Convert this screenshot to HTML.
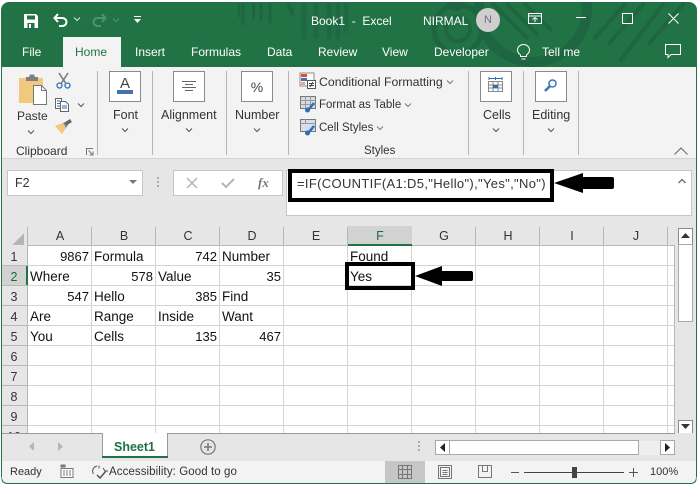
<!DOCTYPE html>
<html><head><meta charset="utf-8">
<style>
html,body{margin:0;padding:0;background:#fff}
#w{position:relative;width:699px;height:487px;overflow:hidden;background:#fff;font-family:"Liberation Sans",Arial,sans-serif;font-size:12.5px;color:#222}
#w div{position:absolute;white-space:nowrap}
.t{color:#fff;font-size:12px;top:44px;line-height:16px}
.r{color:#333;line-height:15px}
.c{font-size:13.5px;color:#111;line-height:16px}
.d{font-size:13px;color:#111;line-height:16px}
.h{font-size:12.5px;color:#333;top:228px;line-height:16px;text-align:center;width:64px}
.n{font-size:12.5px;color:#333;left:1px;width:26px;text-align:center;line-height:16px}
.box{background:#fff;border:1px solid #8a8a8a;width:30px;height:29px;top:71px}
.sep{background:#b5b5b5;width:1px;top:71px;height:84px}
.lab{font-size:12.5px;color:#333;top:107px;line-height:16px;text-align:center}
svg{position:absolute;overflow:visible}
</style></head><body><div id="w">

<!-- title bar -->
<div style="left:1px;top:2px;width:696px;height:65px;background:#217346;border-radius:8px 8px 0 0;overflow:hidden">
<svg style="left:-1px;top:-2px" width="699" height="67" fill="none" stroke="#1e6540">
<path d="M239 3v14M243 3v22" stroke-width="3"/><path d="M253.500 3v16M261 3v18M270 3v20" stroke-width="3"/>
<path d="M288 3l5 12" stroke-width="4"/><path d="M304 3v36M316 3v36M329 3v36M338 3v36M346 3v30" stroke-width="5" opacity=".75"/>
<circle cx="456" cy="2" r="9" fill="#1e6540" stroke="none"/>
<circle cx="458" cy="29" r="12" stroke-width="4"/><circle cx="458" cy="29" r="24" stroke-width="5"/>
<circle cx="533" cy="8" r="54" stroke-width="10" opacity=".9"/>
<path d="M492 3l36 36M506 3l32 32M524 3l28 28M626 3l-32 36M644 3l-36 42M664 3l-44 58M684 3l-36 42" stroke-width="4"/>
</svg></div>

<!-- QAT -->
<svg style="left:24px;top:14px" width="15" height="14" viewBox="0 0 15 14"><path d="M0 0h12l2 2v12H0z" fill="#fff"/><path d="M3 1.500h8v4H3z" fill="#217346"/><path d="M3.500 9h7v5h-7z" fill="#217346"/><path d="M5 10h2v4H5z" fill="#fff"/></svg>
<svg style="left:53px;top:13px" width="15" height="14" viewBox="0 0 15 14" fill="none" stroke="#fff" stroke-width="2"><path d="M5 1L1.500 5 5 9"/><path d="M2 5h7c6 0 6 8 0 8H6"/></svg>
<svg style="left:74px;top:17px" width="6" height="4" fill="none" stroke="#d6e6dc"><path d="M0 .5l3 3 3-3"/></svg>
<svg style="left:92px;top:13px" width="15" height="14" viewBox="0 0 15 14" fill="none" stroke="#4f9270" stroke-width="2"><path d="M10 1l3.500 4L10 9"/><path d="M13 5H6c-6 0-6 8 0 8h3"/></svg>
<svg style="left:113px;top:18px" width="6" height="4" fill="none" stroke="#4f9270"><path d="M0 .5l3 3 3-3"/></svg>
<svg style="left:134px;top:16px" width="8" height="8"><path d="M0 .5h7" stroke="#fff"/><path d="M0 3h7L3.500 7z" fill="#fff"/></svg>

<div style="left:311px;top:13px;color:#fff;font-size:12px;line-height:16px">Book1&nbsp; - &nbsp;Excel</div>
<div style="left:423px;top:13px;color:#fff;font-size:12px;line-height:16px">NIRMAL</div>
<div style="left:476px;top:8px;width:24px;height:24px;border-radius:50%;background:#cfcfcf;color:#6f6f8f;font-size:11px;line-height:24px;text-align:center">N</div>

<svg style="left:528px;top:13px" width="14" height="11" fill="none" stroke="#fff"><path d="M.5 .5h13v10H.5zM.5 3h13"/><path d="M7 9V4.500M4.500 6.500L7 4.500l2.500 2"/></svg>
<div style="left:576px;top:17px;width:10px;height:1px;background:#fff"></div>
<div style="left:622px;top:13px;width:9px;height:9px;border:1px solid #fff"></div>
<svg style="left:668px;top:13px" width="11" height="11" stroke="#fff" fill="none"><path d="M.5 .5l10 10M10.500 .5l-10 10"/></svg>

<!-- tabs -->
<div style="left:63px;top:37px;width:58px;height:30px;background:#f3f3f3"></div>
<div class="t" style="left:22px">File</div>
<div class="t" style="left:75px;color:#217346">Home</div>
<div class="t" style="left:135px">Insert</div>
<div class="t" style="left:191px">Formulas</div>
<div class="t" style="left:267px">Data</div>
<div class="t" style="left:318px">Review</div>
<div class="t" style="left:382px">View</div>
<div class="t" style="left:434px">Developer</div>
<svg style="left:516px;top:44px" width="15" height="17" fill="none" stroke="#fff"><path d="M4.500 11C2 9 1.500 7.500 1.500 6a6 5.500 0 0 1 12 0c0 1.500-.5 3-3 5v1.500h-6z"/><path d="M5.500 15h4"/></svg>
<div class="t" style="left:542px">Tell me</div>
<svg style="left:665px;top:44px" width="17" height="15" fill="none" stroke="#fff"><path d="M.5 .5h15v10H6l-3 3v-3H.5z"/></svg>

<!-- ribbon -->
<div style="left:2px;top:67px;width:694px;height:91px;background:#f3f3f3"></div>
<div style="left:2px;top:158px;width:694px;height:1px;background:#d2d2d2"></div>
<div style="left:2px;top:159px;width:694px;height:67px;background:#e6e6e6"></div>

<!-- clipboard -->
<svg style="left:19px;top:74px" width="28" height="32" viewBox="0 0 28 32">
<path d="M0 4h24v25H0z" fill="#f0c97f"/>
<path d="M7 3h3l1-2.500h4l1 2.500h3v4H7z" fill="#7f7f7f"/>
<path d="M14.500 11.500h8l5 5v14h-13z" fill="#fff" stroke="#777"/>
<path d="M22.500 11.500v5h5" fill="none" stroke="#777"/></svg>
<svg style="left:56px;top:73px" width="15" height="16" viewBox="0 0 15 16" fill="none"><path d="M3 0l6.500 10M12 0L5.500 10" stroke="#777" stroke-width="1.500"/><circle cx="3.500" cy="12.500" r="2.500" stroke="#2f6eb5" stroke-width="1.300"/><circle cx="11.500" cy="12.500" r="2.500" stroke="#2f6eb5" stroke-width="1.300"/></svg>
<svg style="left:55px;top:98px" width="15" height="14" viewBox="0 0 15 14" fill="#fff" stroke="#666"><path d="M.5 .5h6v10h-6z"/><path d="M5.500 3.500h5l3 3v7h-8z"/><path d="M2 3h3M2 5.500h3M2 8h3M7 8h5M7 10h5" stroke="#2f6eb5"/></svg>
<svg style="left:78px;top:103px" width="6" height="4" fill="none" stroke="#555"><path d="M0 .5l3 3 3-3"/></svg>
<svg style="left:55px;top:120px" width="17" height="14" viewBox="0 0 17 14"><path d="M0 6l8-3 3 5-4 6z" fill="#f0c97f"/><path d="M8 3l3 5 2-3-3-3z" fill="#888"/><path d="M10.500 4L16 .5" stroke="#666" stroke-width="3.500"/></svg>
<div class="lab" style="left:17px;top:108px;font-size:12px">Paste</div>
<svg style="left:28px;top:130px" width="6" height="4" fill="none" stroke="#555"><path d="M0 .5l3 3 3-3"/></svg>
<div class="lab" style="left:16px;top:143px;font-size:12px">Clipboard</div>
<svg style="left:86px;top:148px" width="8" height="8" fill="none" stroke="#777"><path d="M.5 7V.5H7M2.500 2.500L7 7M7 3.500V7H3.500"/></svg>
<div class="sep" style="left:97px"></div>

<!-- font -->
<div class="box" style="left:109px"></div>
<div style="left:109px;top:75px;width:32px;text-align:center;font-size:15px;line-height:17px;color:#444">A</div>
<div style="left:117px;top:90px;width:16px;height:4px;background:#4472b0"></div>
<div class="lab" style="left:113px">Font</div>
<svg style="left:122px;top:128px" width="6" height="4" fill="none" stroke="#555"><path d="M0 .5l3 3 3-3"/></svg>
<div class="sep" style="left:152px"></div>

<!-- alignment -->
<div class="box" style="left:173px"></div>
<svg style="left:182px;top:81px" width="14" height="11" stroke="#666"><path d="M0 .5h14M3 3.500h8M0 6.500h14M3 9.500h8"/></svg>
<div class="lab" style="left:161px">Alignment</div>
<svg style="left:186px;top:128px" width="6" height="4" fill="none" stroke="#555"><path d="M0 .5l3 3 3-3"/></svg>
<div class="sep" style="left:226px"></div>

<!-- number -->
<div class="box" style="left:241px"></div>
<div style="left:241px;top:78px;width:32px;text-align:center;font-size:14px;line-height:18px;color:#444">%</div>
<div class="lab" style="left:235px">Number</div>
<svg style="left:254px;top:128px" width="6" height="4" fill="none" stroke="#555"><path d="M0 .5l3 3 3-3"/></svg>
<div class="sep" style="left:288px"></div>

<!-- styles -->
<svg style="left:300px;top:73px" width="16" height="16" viewBox="0 0 16 16"><path d="M0 0h14v13H0z" fill="#fff" stroke="#888"/><path d="M1 1h6v3H1z" fill="#d9512c"/><path d="M1 5h6v3H1z" fill="#4472b0"/><path d="M1 9h4v3H1z" fill="#e8a878"/><path d="M7.500 7.500h8v8h-8z" fill="#fff" stroke="#555"/><path d="M9 10.500h5M9 12.500h5M10 14l3-5" stroke="#444" fill="none"/></svg>
<svg style="left:300px;top:96px" width="16" height="17" viewBox="0 0 16 17"><path d="M.5 .5h15v12H.5z" fill="#d6dce6" stroke="#777"/><path d="M.5 4.500h15M5.500 .5v12M10.500 .5v12M.5 8.500h15" stroke="#999"/><path d="M14 7l-5 6" stroke="#2f6eb5" stroke-width="2.500"/><circle cx="7.500" cy="14" r="2.500" fill="#2f6eb5"/></svg>
<svg style="left:300px;top:119px" width="16" height="17" viewBox="0 0 16 17"><path d="M.5 .5h15v12H.5z" fill="#d6dfee" stroke="#777"/><path d="M.5 4.500h15M5.500 .5v4" stroke="#999"/><path d="M14 7l-5 6" stroke="#2f6eb5" stroke-width="2.500"/><circle cx="7.500" cy="14" r="2.500" fill="#2f6eb5"/></svg>
<div class="lab" style="left:319px;top:74px;font-size:12.300px">Conditional Formatting</div>
<svg style="left:447px;top:80px" width="6" height="4" fill="none" stroke="#777"><path d="M0 .5l3 3 3-3"/></svg>
<div class="lab" style="left:319px;top:97px;font-size:11.500px">Format as Table</div>
<svg style="left:405px;top:103px" width="6" height="4" fill="none" stroke="#777"><path d="M0 .5l3 3 3-3"/></svg>
<div class="lab" style="left:319px;top:120px;font-size:11.500px">Cell Styles</div>
<svg style="left:377px;top:126px" width="6" height="4" fill="none" stroke="#777"><path d="M0 .5l3 3 3-3"/></svg>
<div class="lab" style="left:364px;top:143px;font-size:11.500px">Styles</div>
<div class="sep" style="left:468px"></div>

<!-- cells -->
<div class="box" style="left:480px"></div>
<svg style="left:488px;top:77px" width="15" height="17" viewBox="0 0 15 17" fill="none"><path d="M1 1.500h13M1 0v3M14 0v3M7.500 0v3" stroke="#2f6eb5"/><path d="M.5 4.500h14v10H.5zM.5 8h14M.5 11h14M5 4.500v10M10 4.500v10" stroke="#888"/><path d="M5 8h5v3H5z" fill="#2f6eb5"/></svg>
<div class="lab" style="left:483px">Cells</div>
<svg style="left:493px;top:128px" width="6" height="4" fill="none" stroke="#555"><path d="M0 .5l3 3 3-3"/></svg>
<div class="sep" style="left:523px"></div>

<!-- editing -->
<div class="box" style="left:535px"></div>
<svg style="left:544px;top:79px" width="13" height="14" fill="none" stroke="#3b72b5"><circle cx="8.500" cy="4.500" r="3.500" stroke-width="1.500"/><path d="M6 7l-5 5" stroke-width="2.500"/></svg>
<div class="lab" style="left:532px">Editing</div>
<svg style="left:548px;top:128px" width="6" height="4" fill="none" stroke="#555"><path d="M0 .5l3 3 3-3"/></svg>
<div class="sep" style="left:578px"></div>
<svg style="left:674px;top:147px" width="14" height="8" fill="none" stroke="#666"><path d="M.5 7.500L7 1l6.500 6.500"/></svg>

<!-- name box -->
<div style="left:7px;top:170px;width:134px;height:24px;background:#fff;border:1px solid #c6c6c6"></div>
<div style="left:15px;top:175px;font-size:12.500px;line-height:16px;color:#333">F2</div>
<svg style="left:129px;top:180px" width="8" height="5"><path d="M0 0h8L4 4z" fill="#777"/></svg>
<svg style="left:157px;top:177px" width="3" height="12" fill="#aaa"><rect width="2" height="2"/><rect y="4" width="2" height="2"/><rect y="8" width="2" height="2"/></svg>
<div style="left:173px;top:170px;width:108px;height:24px;background:#fff;border:1px solid #c6c6c6"></div>
<svg style="left:187px;top:178px" width="10" height="10" stroke="#b5b5b5" stroke-width="1.500"><path d="M0 0l10 10M10 0L0 10"/></svg>
<svg style="left:221px;top:178px" width="14" height="10" fill="none" stroke="#b5b5b5" stroke-width="2"><path d="M1 5l4 4 8-8"/></svg>
<div style="left:258px;top:175px;font-family:'Liberation Serif',serif;font-style:italic;font-weight:bold;font-size:13px;line-height:15px;color:#777">fx</div>

<!-- formula bar -->
<div style="left:286px;top:170px;width:404px;height:44px;background:#fff;border:1px solid #c6c6c6"></div>
<div style="left:288px;top:169px;width:258px;height:25px;border:4px solid #000;background:#fff"></div>
<div style="left:297px;top:176px;font-size:13px;line-height:16px;color:#333;letter-spacing:.33px">=IF(COUNTIF(A1:D5,"Hello"),"Yes","No")</div>
<svg style="left:554px;top:173px" width="60" height="20"><path d="M0 10L29 0v4h29q2 0 2 2v8q0 2-2 2H29v4z" fill="#000"/></svg>
<svg style="left:678px;top:178px" width="8" height="6" fill="none" stroke="#777" stroke-width="1.500"><path d="M.5 5L4 1.500 7.500 5"/></svg>

<!-- grid -->
<div style="left:2px;top:226px;width:694px;height:207px;background:#e6e6e6"></div>
<div style="left:28px;top:246px;width:646px;height:187px;background:#fff"></div>
<svg style="left:0;top:226px" width="699" height="207" shape-rendering="crispEdges">
<g stroke="#d4d4d4"><path d="M91.500 20v187M155.500 20v187M219.500 20v187M283.500 20v187M347.500 20v187M411.500 20v187M475.500 20v187M539.500 20v187M603.500 20v187M667.500 20v187M28 39.500h646M28 59.500h646M28 79.500h646M28 99.500h646M28 119.500h646M28 139.500h646M28 159.500h646M28 179.500h646M28 199.500h646"/></g>
<g stroke="#b8b8b8"><path d="M27.500 1v206M91.500 1v18M155.500 1v18M219.500 1v18M283.500 1v18M347.500 1v18M411.500 1v18M475.500 1v18M539.500 1v18M603.500 1v18M667.500 1v18M2 39.500h25M2 59.500h25M2 79.500h25M2 99.500h25M2 119.500h25M2 139.500h25M2 159.500h25M2 179.500h25M2 199.500h25"/><path d="M28 19.500h646M674.500 19v188"/></g>
<path d="M348 0h64v19h-64z" fill="#d2d2d2"/>
<path d="M348 19h64" stroke="#217346" stroke-width="2"/>
<path d="M12 19L24 7v12z" fill="#b5b5b5"/>
<path d="M2 40h25v19H2z" fill="#d2d2d2"/>
<path d="M27 40v19" stroke="#217346" stroke-width="2"/>
</svg>

<div class="h" style="left:28px">A</div>
<div class="h" style="left:92px">B</div>
<div class="h" style="left:156px">C</div>
<div class="h" style="left:220px">D</div>
<div class="h" style="left:284px">E</div>
<div class="h" style="left:348px;color:#1c6b40">F</div>
<div class="h" style="left:412px">G</div>
<div class="h" style="left:476px">H</div>
<div class="h" style="left:540px">I</div>
<div class="h" style="left:604px">J</div>

<div class="n" style="top:249px">1</div>
<div class="n" style="top:269px;color:#1c6b40">2</div>
<div class="n" style="top:289px">3</div>
<div class="n" style="top:309px">4</div>
<div class="n" style="top:329px">5</div>
<div class="n" style="top:349px">6</div>
<div class="n" style="top:369px">7</div>
<div class="n" style="top:389px">8</div>
<div class="n" style="top:409px">9</div>
<div style="left:1px;top:429px;width:26px;height:4px;overflow:hidden;text-align:center;font-size:12.500px;line-height:16px;color:#333">10</div>

<div class="d" style="right:610px;top:249px">9867</div>
<div class="c" style="left:94px;top:249px">Formula</div>
<div class="d" style="right:482px;top:249px">742</div>
<div class="c" style="left:222px;top:249px">Number</div>
<div class="c" style="left:350px;top:249px">Found</div>
<div class="c" style="left:30px;top:269px">Where</div>
<div class="d" style="right:546px;top:269px">578</div>
<div class="c" style="left:158px;top:269px">Value</div>
<div class="d" style="right:418px;top:269px">35</div>
<div class="d" style="right:610px;top:289px">547</div>
<div class="c" style="left:94px;top:289px">Hello</div>
<div class="d" style="right:482px;top:289px">385</div>
<div class="c" style="left:222px;top:289px">Find</div>
<div class="c" style="left:30px;top:309px">Are</div>
<div class="c" style="left:94px;top:309px">Range</div>
<div class="c" style="left:158px;top:309px">Inside</div>
<div class="c" style="left:222px;top:309px">Want</div>
<div class="c" style="left:30px;top:329px">You</div>
<div class="c" style="left:94px;top:329px">Cells</div>
<div class="d" style="right:482px;top:329px">135</div>
<div class="d" style="right:418px;top:329px">467</div>

<!-- F2 box -->
<div style="left:345px;top:262px;width:62px;height:20px;border:4px solid #000"></div>
<div class="c" style="left:350px;top:269px">Yes</div>
<svg style="left:415px;top:266px" width="58" height="20"><path d="M0 10L27 0v5h29q2 0 2 2v6q0 2-2 2H27v5z" fill="#000"/></svg>

<!-- vertical scrollbar -->
<div style="left:675px;top:226px;width:21px;height:207px;background:#e6e6e6"></div>
<div style="left:678px;top:228px;width:13px;height:15px;background:#fff;border:1px solid #8a8a8a"></div>
<svg style="left:681px;top:233px" width="9" height="5"><path d="M0 5h9L4.500 0z" fill="#333"/></svg>
<div style="left:678px;top:244px;width:13px;height:76px;background:#fff;border:1px solid #a8a8a8"></div>
<div style="left:678px;top:420px;width:13px;height:12px;background:#fff;border:1px solid #8a8a8a"></div>
<svg style="left:681px;top:424px" width="9" height="5"><path d="M0 0h9L4.500 5z" fill="#333"/></svg>

<!-- sheet tabs -->
<div style="left:2px;top:433px;width:694px;height:28px;background:#e6e6e6"></div>
<div style="left:2px;top:433px;width:673px;height:1px;background:#9a9a9a"></div>
<svg style="left:29px;top:442px" width="35" height="9" fill="#b5b5b5"><path d="M5 0v9L0 4.500zM29 0v9l5-4.500z"/></svg>
<div style="left:102px;top:433px;width:64px;height:24px;background:#fff;border-left:1px solid #9a9a9a;border-right:1px solid #9a9a9a"></div>
<div style="left:102px;top:456px;width:66px;height:2px;background:#217346"></div>
<div style="left:114px;top:439px;font-weight:bold;font-size:12.500px;line-height:16px;color:#1f7246">Sheet1</div>
<svg style="left:200px;top:439px" width="16" height="16" fill="none" stroke="#777"><circle cx="8" cy="8" r="7.200" stroke-width="1.200"/><path d="M8 4v8M4 8h8" stroke-width="1.600"/></svg>
<svg style="left:418px;top:441px" width="3" height="12" fill="#aaa"><rect width="2" height="2"/><rect y="4" width="2" height="2"/><rect y="8" width="2" height="2"/></svg>
<div style="left:639px;top:441px;width:21px;height:14px;background:#eee"></div>
<div style="left:449px;top:440px;width:188px;height:13px;background:#fff;border:1px solid #a8a8a8"></div>
<div style="left:435px;top:440px;width:13px;height:13px;background:#fff;border:1px solid #a8a8a8"></div>
<svg style="left:440px;top:443px" width="5" height="9"><path d="M5 0v9L0 4.500z" fill="#222"/></svg>
<div style="left:660px;top:440px;width:13px;height:13px;background:#fff;border:1px solid #a8a8a8"></div>
<svg style="left:665px;top:443px" width="5" height="9"><path d="M0 0v9l5-4.500z" fill="#222"/></svg>

<!-- status bar -->
<div style="left:2px;top:461px;width:694px;height:22px;background:#f3f3f3"></div>
<div class="r" style="left:10px;top:465px;font-size:11px">Ready</div>
<svg style="left:60px;top:464px" width="14" height="14" viewBox="0 0 14 14"><path d="M.5 .5h5v3h-5z" fill="#777"/><path d="M1 4.500h12v9H1z" fill="#fff" stroke="#777"/><path d="M3 7h8M3 9h8M3 11h8" stroke="#777" stroke-dasharray="2 1"/></svg>
<svg style="left:91px;top:465px" width="17" height="15" viewBox="0 0 17 15" fill="none" stroke="#555"><path d="M6 1C2 2 .5 6 2.500 9M8 .5v3M12 3l2 3h3"/><path d="M6 10l3 3 6-7" stroke-width="1.500"/></svg>
<div class="r" style="left:109px;top:465px;font-size:11.500px;letter-spacing:.08px">Accessibility: Good to go</div>
<div style="left:385px;top:461px;width:40px;height:22px;background:#c6c6c6"></div>
<svg style="left:398px;top:465px" width="14" height="14" fill="none" stroke="#777" shape-rendering="crispEdges"><path d="M.5 .5h13v13H.5zM.5 4.500h13M.5 9.500h13M4.500 .5v13M9.500 .5v13"/></svg>
<svg style="left:438px;top:465px" width="14" height="14" fill="none" stroke="#777" shape-rendering="crispEdges"><path d="M.5 .5h13v13H.5zM2.500 2.500h9v9h-9zM4.500 5.500h5M4.500 7.500h5M4.500 9.500h5"/></svg>
<svg style="left:478px;top:465px" width="14" height="13" fill="none" stroke="#777" shape-rendering="crispEdges"><path d="M.5 .5h13v12H.5zM4.500 .5v6h5v-6"/></svg>
<div style="left:511px;top:472px;width:8px;height:1px;background:#555"></div>
<div style="left:524px;top:472px;width:100px;height:1px;background:#444"></div>
<div style="left:572px;top:467px;width:5px;height:11px;background:#444"></div>
<svg style="left:629px;top:467px" width="10" height="10" stroke="#555"><path d="M0 5.500h9M4.500 1v9"/></svg>
<div class="r" style="left:650px;top:465px;font-size:11px">100%</div>

<!-- window edges with rounded bottom corners -->
<svg style="left:0;top:0" width="699" height="487" fill="none" stroke="#217346"><path d="M1.500 67v410q0 6.500 6.500 6.500h682q6.500 0 6.500-6.500V67"/></svg>
<svg style="left:0;top:474px" width="699" height="13"><path d="M0 3h1.500v3q0 7.500 6.500 7.500H0zM699 3h-2.500v3q0 7.500-6.500 7.500h9z" fill="#fff"/></svg>
</div></body></html>
